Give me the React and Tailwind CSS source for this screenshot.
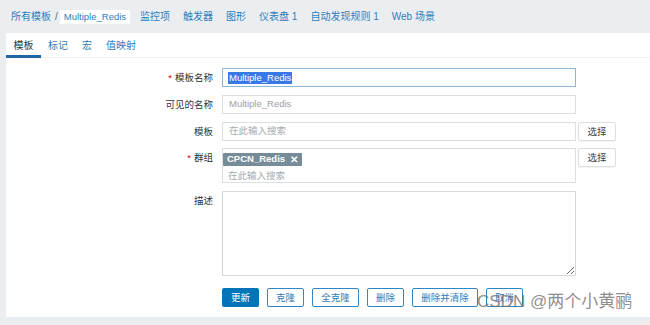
import React from 'react';

const font = { fontFamily: '"Liberation Sans", "Noto Sans CJK SC", sans-serif' };

const navItems = ['监控项', '触发器', '图形', '仪表盘 1', '自动发现规则 1', 'Web 场景'];
const tabs = ['模板', '标记', '宏', '值映射'];

const Label = ({ children, required }) => (
    <div className="w-[216px] pr-[9px] text-right text-[#2a3439] text-[9.5px] leading-[19px]">
        {required && <span className="text-[#dc0000] mr-[3px]">*</span>}
        {children}
    </div>
);

const Row = ({ label, required, children, className = '' }) => (
    <div className={'flex items-start ' + className}>
        <Label required={required}>{label}</Label>
        {children}
    </div>
);

const SelectBtn = () => (
    <button className="ml-[2px] w-[38px] h-[19px] bg-white border border-[#dcdfe2] rounded-[2px] text-[9.5px] text-[#3a4349] leading-none shadow-[0_1px_1px_rgba(0,0,0,0.05)]">
        选择
    </button>
);

const OutlineBtn = ({ children, w }) => (
    <button className={'h-[19px] border border-[#2f86c4] rounded-[2px] bg-white text-[#2f7dbb] text-[9.5px] leading-none ' + w}>
        {children}
    </button>
);

const App = () => {
    return (
        <div className="relative w-[650px] h-[325px] overflow-hidden bg-[#ebeef1]" style={font}>
            {/* breadcrumb nav */}
            <nav className="h-[33px] flex items-center pl-[11px] text-[10px] text-[#2f7dbb]">
                <span>所有模板</span>
                <span className="ml-[4px] text-[#5b6770]">/</span>
                <span className="ml-[2px] bg-white px-[4px] h-[14px] leading-[14px] text-[9.5px] text-[#2f7dbb]">Multiple_Redis</span>
                <div className="flex gap-[13px] ml-[10px]">
                    {navItems.map((n) => (
                        <span key={n}>{n}</span>
                    ))}
                </div>
            </nav>

            <div className="ml-[6px] h-[284px] bg-white">
                {/* tabs */}
                <div className="h-[25px] flex border-b border-[#eef0f2] text-[10px] text-[#2f7dbb]">
                    {tabs.map((t, i) => (
                        <div
                            key={t}
                            className={
                                'h-[25px] flex items-center whitespace-nowrap ' +
                                (i === 0
                                    ? 'w-[35px] justify-center text-[#2a3439] border-b-[3px] border-[#1f65a6] pt-[3px]'
                                    : 'px-[7px]')
                            }
                        >
                            {t}
                        </div>
                    ))}
                </div>

                {/* form */}
                <div className="pt-[10px] flex flex-col">
                    <Row label="模板名称" required>
                        <div className="w-[354px] h-[19px] border border-[#8cb5d6] flex items-center px-[5px] text-[9.5px]">
                            <span className="bg-[#3b78e7] text-white leading-[12px] px-[1px]">Multiple_Redis</span>
                        </div>
                    </Row>
                    <Row label="可见的名称" className="mt-[8px]">
                        <div className="w-[354px] h-[19px] border border-[#dcdfe2] flex items-center px-[6px] text-[9.5px] text-[#9aa0a4]">
                            Multiple_Redis
                        </div>
                    </Row>
                    <Row label="模板" className="mt-[8px]">
                        <div className="w-[354px] h-[19px] border border-[#dcdfe2] flex items-center px-[6px] text-[9.5px] text-[#a5abaf]">
                            在此输入搜索
                        </div>
                        <SelectBtn />
                    </Row>
                    <Row label="群组" required className="mt-[7px]">
                        <div className="w-[354px] h-[35px] border border-[#dcdfe2] pt-[3px] text-[9.5px]">
                            <span className="inline-flex items-center h-[13px] bg-[#768d99] text-white px-[4px] rounded-[1px] font-bold">
                                CPCN_Redis
                                <span className="ml-[5px] text-[10px]">✕</span>
                            </span>
                            <div className="pl-[5px] mt-[3px] text-[#a5abaf]">在此输入搜索</div>
                        </div>
                        <SelectBtn />
                    </Row>
                    <Row label="描述" className="mt-[8px]">
                        <textarea
                            readOnly
                            className="w-[354px] h-[85px] border border-[#d4d9dd] outline-none resize"
                        />
                    </Row>
                    <div className="flex items-center gap-[8px] mt-[12px] pl-[216px]">
                        <button className="w-[37px] h-[19px] rounded-[2px] bg-[#0275b8] text-white text-[9.5px] leading-none">
                            更新
                        </button>
                        <OutlineBtn w="w-[37px]">克隆</OutlineBtn>
                        <OutlineBtn w="w-[47px]">全克隆</OutlineBtn>
                        <OutlineBtn w="w-[37px]">删除</OutlineBtn>
                        <OutlineBtn w="w-[66px]">删除并清除</OutlineBtn>
                        <OutlineBtn w="w-[37px]">取消</OutlineBtn>
                    </div>
                </div>
            </div>

            {/* watermark */}
            <div className="absolute left-[477px] top-[290px] text-[17px] leading-[24px] text-[#6f6f6f]/80 whitespace-nowrap">
                CSDN @两个小黄鹂
            </div>
        </div>
    );
};

export default App;
